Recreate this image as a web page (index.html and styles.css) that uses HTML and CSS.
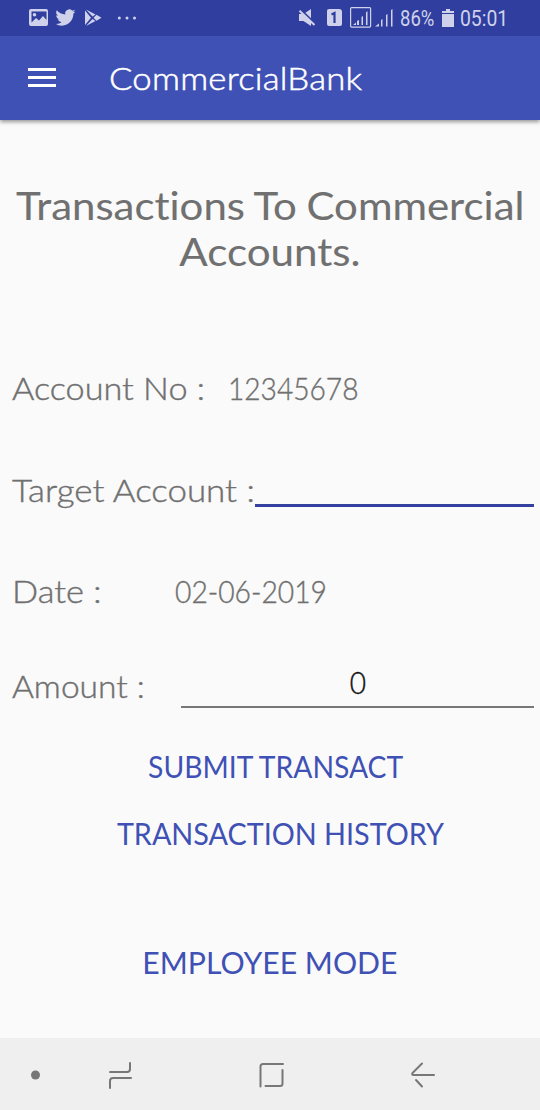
FILE: index.html
```html
<!DOCTYPE html>
<html lang="en">
<head>
<meta charset="utf-8">
<title>CommercialBank</title>
<link rel="stylesheet" href="styles.css">
</head>
<body>
<div class="screen">
  <header class="status">
    <svg class="notifications" width="145" height="36" viewBox="0 0 145 36" fill="currentColor">
      <path fill-rule="evenodd" d="M31 9h15q2 0 2 2v13q0 2-2 2H31q-2 0-2-2V11q0-2 2-2zm.5 2.500v11l4.500-4.500 3 2.500 4-4.500 3.500 4v-8.500zM34.500 13a1.800 1.800 0 1 1 0 3.600 1.800 1.800 0 0 1 0-3.600z"/>
      <path transform="translate(55.500 7.600) scale(.83)" d="M23.950 4.570a10 10 0 0 1-2.820.770 4.960 4.960 0 0 0 2.160-2.720c-.950.550-2 .950-3.130 1.180a4.920 4.920 0 0 0-8.380 4.480C7.690 8.100 4.070 6.130 1.640 3.160a4.920 4.920 0 0 0 1.520 6.570 4.900 4.900 0 0 1-2.230-.610v.060a4.920 4.920 0 0 0 3.950 4.830 5 5 0 0 1-2.210.080 4.940 4.940 0 0 0 4.600 3.420A9.870 9.870 0 0 1 0 19.540a14 14 0 0 0 7.550 2.210c9.050 0 14-7.500 14-13.980v-.630a9.940 9.940 0 0 0 2.400-2.570z"/>
      <path d="M85 10.500v14.500l6-7.200zM86 9.500l6.500 7 3-2zM86 26l6.500-7 3 2zM93.500 17.800l3-3 5 3-5 3z"/>
      <circle cx="119.300" cy="18" r="1.500"/><circle cx="127" cy="18" r="1.500"/><circle cx="134.500" cy="18" r="1.500"/>
    </svg>
    <div class="indicators">
      <svg width="96" height="36" viewBox="298 0 96 36" fill="currentColor">
        <path d="M299 14h4.500l7.500-5v17l-7.500-5H299z"/>
        <path d="M300.500 9.500l16 15.500" stroke="#303f9f" stroke-width="2"/>
        <path d="M299.500 10.800L314.500 25" stroke="currentColor" stroke-width="2"/>
        <path d="M329 9h10q3 0 3 3v12q0 2-2 2h-11q-2 0-2-2V11q0-2 2-2z"/>
        <path d="M331.500 14.500l3-1.500v10" fill="none" stroke="#303f9f" stroke-width="2.200"/>
        <rect x="350.600" y="7.600" width="20" height="19.500" rx="1" fill="none" stroke="currentColor" stroke-width="1.200"/>
        <path d="M353 25l3-2.500V25zM357 21l2-1v5h-2zM361.500 17l1.500-1v9h-1.500zM366 12.500l1.500-1.500v14H366zM375 26.500l4-3v3zM381 20l1.500-1v7.500H381zM386 15l1.500-1v12.500H386zM391 10l1.500-1v17.500H391z"/>
      </svg>
      <span class="percent">86%</span>
      <svg class="battery" width="12" height="18" viewBox="0 0 12 18" fill="currentColor"><path d="M4 0h4v2h4v2H0V2h4zM0 5h12v13H0z"/></svg>
      <span class="clock">05:01</span>
    </div>
  </header>
  <div class="appbar">
    <svg class="menu" width="28" height="20" viewBox="0 0 28 20" fill="#fff"><path d="M0 0h28v3H0zM0 8h28v3H0zM0 16h28v3H0z"/></svg>
    <span class="brand">CommercialBank</span>
  </div>
  <main class="content">
    <h1 class="heading"><span class="heading-first">Transactions To Commercial</span><span class="heading-second">Accounts.</span></h1>
    <div class="row account"><span class="label label-account">Account No :</span><span class="value number">12345678</span></div>
    <div class="row target"><span class="label label-target">Target Account :</span><span class="field field-active"></span></div>
    <div class="row date"><span class="label label-date">Date :</span><span class="value day">02-06-2019</span></div>
    <div class="row amount"><span class="label label-amount">Amount :</span><span class="field field-amount"><span class="zero">0</span></span></div>
    <div class="actions">
      <span class="submit">SUBMIT TRANSACT</span>
      <span class="history">TRANSACTION HISTORY</span>
      <span class="employee">EMPLOYEE MODE</span>
    </div>
  </main>
  <nav class="navbar">
    <svg width="540" height="72" viewBox="0 0 540 72" fill="none" stroke="#777" stroke-width="2" stroke-linecap="round" stroke-linejoin="round">
      <circle cx="35.500" cy="37" r="4.500" fill="#777" stroke="none"/>
      <path d="M110 34h17q3 0 3-3v-6M131 40h-18q-3 0-3 3v7"/>
      <path d="M260.500 48.500V28.500q0-2.500 2.500-2.500h20M282.500 32v13.500q0 2.500-2.500 2.500h-14.500"/>
      <path d="M422 25.500L412.500 35q-1 2 1 2H434M416 42l6 6.500"/>
    </svg>
  </nav>
</div>
</body>
</html>
```
FILE: styles.css
```css
body { margin: 0; }
.screen { width: 540px; height: 1110px; display: flex; flex-direction: column; background: #fafafa; font-family: Lato, sans-serif; font-weight: 300; font-variant-ligatures: none; color: #707070; white-space: nowrap; overflow: hidden; }
.status { height: 36px; flex: none; display: flex; justify-content: space-between; background: #303f9f; color: #cfd2ea; }
.indicators { display: flex; align-items: center; width: 242px; font: 400 21.5px/38px Roboto, sans-serif; }
.indicators svg { flex: none; }
.percent { flex: none; width: 42px; margin-left: 6px; transform: translateY(1px) scaleX(.86); transform-origin: left; }
.clock { margin-left: 6px; transform: translateY(1px) scaleX(.9); transform-origin: left; }
.appbar { height: 84px; flex: none; display: flex; align-items: center; position: relative; background: #3f51b5; box-shadow: 0 2px 4px rgba(0,0,0,.4); clip-path: inset(0 0 -10px); color: #fff; }
.menu { margin-left: 28px; }
.brand { margin-left: 53px; font-size: 31px; letter-spacing: .2px; -webkit-text-stroke: .5px currentColor; transform: scaleX(1.120); transform-origin: left; }
.content { flex: 1; padding-top: 62px; }
.heading { margin: 0; height: 92px; display: flex; flex-direction: column; align-items: center; font-size: 39px; line-height: 46px; font-weight: 400; -webkit-text-stroke: .1px currentColor; }
.heading-first { word-spacing: -1px; transform: scaleX(1.076); }
.heading-second { transform: scaleX(1.080); }
.row { display: flex; height: 40px; padding: 0 6px 0 12px; font-size: 30.5px; line-height: 40px; -webkit-text-stroke: .4px currentColor; }
.account { margin-top: 94px; }
.target { margin-top: 61px; }
.date { margin-top: 62px; }
.amount { margin-top: 51px; height: 46px; line-height: 49px; }
.label, .value { flex: none; transform-origin: left; }
.label-account { width: 216px; transform: scaleX(1.122); }
.label-target { width: 243px; transform: translateY(1px) scaleX(1.145); }
.label-date { width: 162px; transform: scaleX(1.130); }
.label-amount { width: 169px; transform: scaleX(1.100); }
.number { transform: scaleX(.922); }
.day { transform: translateX(1px) scaleX(.926); }
.field { flex: 1; }
.field-active { height: 34.500px; border-bottom: 3px solid #3340a0; }
.field-amount { height: 44px; line-height: 41px; border-bottom: 2px solid #777; text-align: center; color: #111; }
.zero { display: inline-block; transform: scaleX(.92); }
.actions { display: flex; flex-direction: column; align-items: center; color: #3f51b5; font-size: 30.5px; line-height: 40px; font-weight: 400; padding-top: 38px; }
.submit { margin-left: 11px; transform: scaleX(.927); }
.history { margin-top: 27px; margin-left: 20px; transform: scaleX(.943); }
.employee { margin-top: 89px; transform: scaleX(.990); }
.navbar { height: 72px; flex: none; background: #efefef; }
.navbar svg { display: block; }
```
